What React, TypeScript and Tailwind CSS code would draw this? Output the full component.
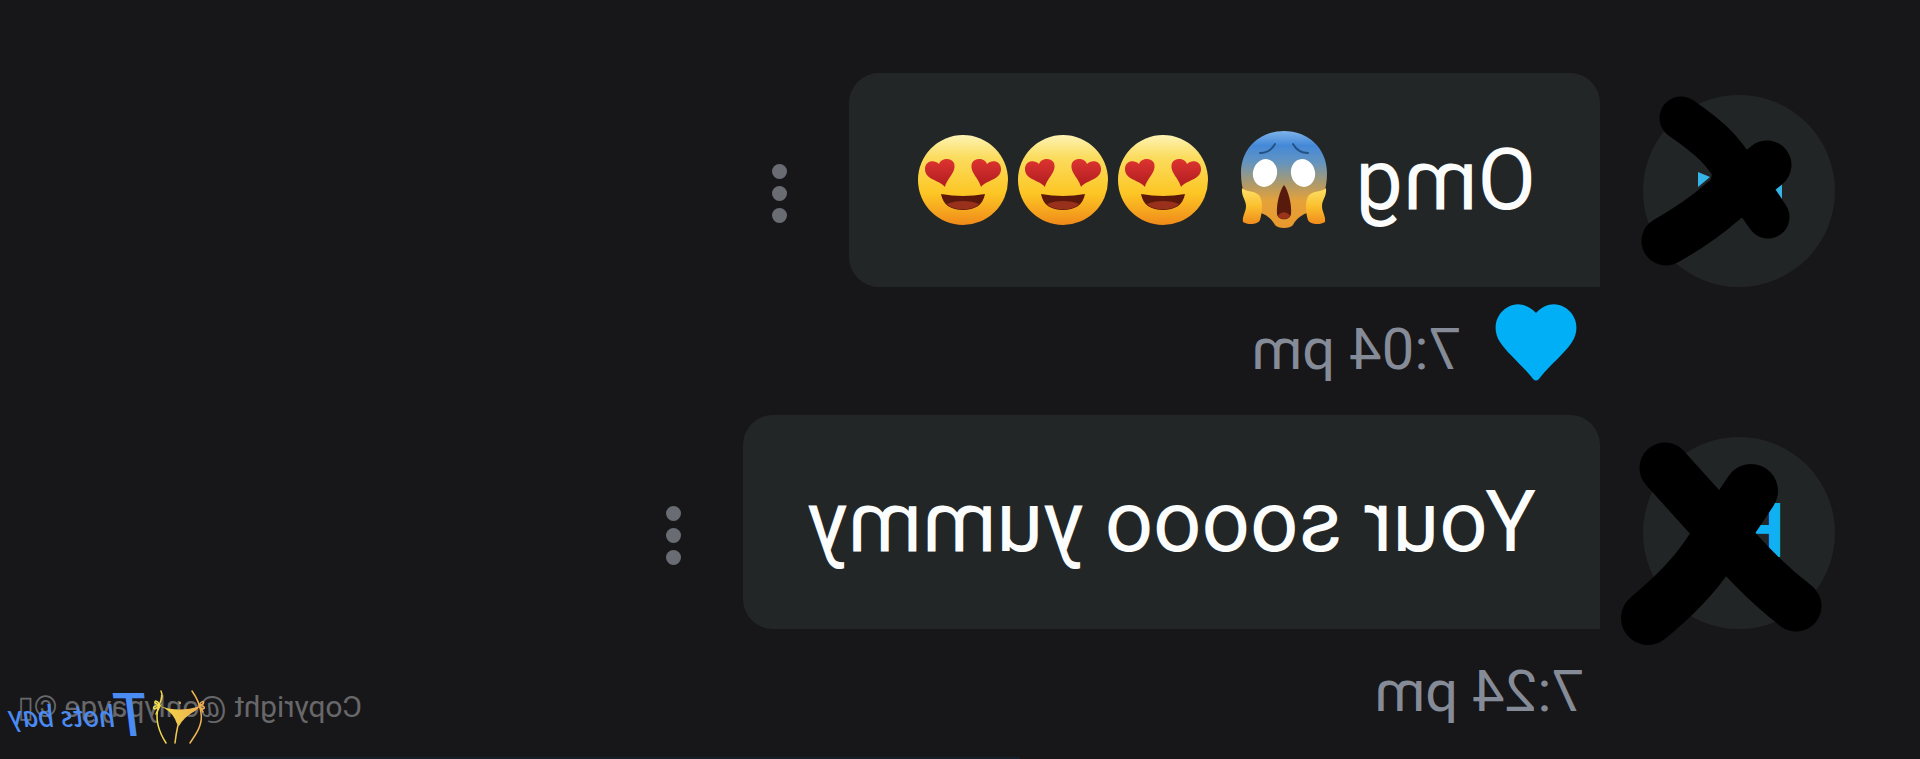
import type { ReactNode } from "react";

function HeartEyes() {
  return (
    <svg viewBox="0 0 100 100" role="img" aria-label="heart eyes" className="size-[100px] shrink-0">
      <defs>
        <linearGradient id="he-face" x1="0" y1="0" x2="0" y2="1">
          <stop offset="0" stopColor="#fdf3b4" />
          <stop offset="0.25" stopColor="#fbdc5e" />
          <stop offset="0.65" stopColor="#fcc624" />
          <stop offset="1" stopColor="#f08a1a" />
        </linearGradient>
        <linearGradient id="he-heart" x1="0" y1="0" x2="0" y2="1">
          <stop offset="0" stopColor="#dd3430" />
          <stop offset="1" stopColor="#b01c20" />
        </linearGradient>
      </defs>
      <circle cx="50" cy="50" r="45" fill="url(#he-face)" />
      <path d="M32 57C27 50 12 50 12 39C12 31 21 29 26 34C28 28 38 27 41 33C44 42 34 48 32 57Z" fill="url(#he-heart)" />
      <path d="M68 57C73 50 88 50 88 39C88 31 79 29 74 34C72 28 62 27 59 33C56 42 66 48 68 57Z" fill="url(#he-heart)" />
      <path d="M28 64Q50 68 72 64C70 75 62 80 50 80C38 80 30 75 28 64Z" fill="#5c190b" />
      <path d="M34 74C42 70 58 70 66 74C60 81 40 81 34 74Z" fill="#98301c" />
    </svg>
  );
}

function Scream() {
  return (
    <svg viewBox="0 0 100 100" role="img" aria-label="screaming in fear" className="size-[100px] shrink-0">
      <defs>
        <linearGradient id="sc-face" x1="0" y1="0" x2="0" y2="1">
          <stop offset="0" stopColor="#7fb2ea" />
          <stop offset="0.15" stopColor="#4489d8" />
          <stop offset="0.32" stopColor="#6394c0" />
          <stop offset="0.55" stopColor="#b09a68" />
          <stop offset="0.72" stopColor="#e5a23a" />
          <stop offset="1" stopColor="#e8982c" />
        </linearGradient>
        <linearGradient id="sc-hand" x1="0" y1="0" x2="0" y2="1">
          <stop offset="0" stopColor="#fde06a" />
          <stop offset="0.5" stopColor="#fbc02e" />
          <stop offset="1" stopColor="#f08c1c" />
        </linearGradient>
      </defs>
      <path
        d="M50 1C74 1 93 18 93 43C93 60 88 73 76 82C68 84 62 89 59 95C56 99 44 99 41 95C38 89 32 84 24 82C12 73 7 60 7 43C7 18 26 1 50 1Z"
        fill="url(#sc-face)"
      />
      <path d="M26 23Q36 23 41 14M74 23Q64 23 59 14" fill="none" stroke="#235286" strokeWidth="2" strokeLinecap="round" />
      <ellipse cx="31" cy="43" rx="12" ry="14" transform="rotate(15 31 43)" fill="#fff" />
      <ellipse cx="69" cy="43" rx="12" ry="14" transform="rotate(-15 69 43)" fill="#fff" />
      <path d="M50 55C54 60 58 74 57 84C56 91 44 91 43 84C42 74 46 60 50 55Z" fill="#571a0c" />
      <path d="M44 86C47 81 53 81 56 86C55 90 45 90 44 86Z" fill="#9a341a" />
      <path d="M8 58C11 62 19 60 25 65C30 72 28 83 26 90C24 95 13 95 9 92C8 86 12 82 12 76C12 70 7 66 8 58Z" fill="url(#sc-hand)" />
      <path d="M92 58C89 62 81 60 75 65C70 72 72 83 74 90C76 95 87 95 91 92C92 86 88 82 88 76C88 70 93 66 92 58Z" fill="url(#sc-hand)" />
    </svg>
  );
}

function Avatar({ children }: { children: ReactNode }) {
  return (
    <div className="mt-[22px] size-48 shrink-0 rounded-full bg-[#222526]">
      <svg viewBox="0 0 192 192" aria-hidden="true" className="size-48 -scale-x-100 overflow-visible">
        {children}
      </svg>
    </div>
  );
}

function Message({ avatar, children, footer }: { avatar: ReactNode; children: ReactNode; footer: ReactNode }) {
  return (
    <article className="flex items-start gap-[43px]">
      {avatar}
      <div>
        <div className="flex items-center gap-14">
          <div className="flex h-[214px] items-center rounded-[30px] rounded-bl-none bg-[#232627] px-16 text-[85px] leading-[100px] whitespace-pre text-[#fbfdfd]">
            {children}
          </div>
          <button type="button" aria-label="Message options" className="mt-[26px] flex w-7 flex-col items-center gap-[7px]">
            <span className="size-[15px] rounded-full bg-[#6a6c74]" />
            <span className="size-[15px] rounded-full bg-[#6a6c74]" />
            <span className="size-[15px] rounded-full bg-[#6a6c74]" />
          </button>
        </div>
        <footer className="flex h-32 items-start gap-[34px] pt-4 text-[58px] leading-[92px] text-[#868b98]">{footer}</footer>
      </div>
    </article>
  );
}

function Watermark() {
  return (
    <div className="absolute right-0 bottom-0 h-[72px] w-[362px]">
      <p className="pt-0.5 text-[30px] leading-9 whitespace-nowrap text-[#68686a]">Copyright @onlypayge ©▯</p>
      <div className="absolute top-0 right-2 flex items-start gap-1">
        <svg viewBox="0 0 54 56" aria-hidden="true" className="mt-0.5 h-14 w-[54px] -scale-x-100">
          <defs>
            <linearGradient id="gold" gradientUnits="userSpaceOnUse" x1="0" y1="0" x2="54" y2="0">
              <stop offset="0" stopColor="#f3e24a" />
              <stop offset="1" stopColor="#efaa50" />
            </linearGradient>
          </defs>
          <g fill="none" stroke="url(#gold)" strokeWidth="1.5" strokeLinecap="round">
            <path d="M9 2C12 8 8 13 6 19C3 31 7 43 14 54" />
            <path d="M40 2C45 9 48 15 49 24C51 36 44 45 38 54" />
            <path d="M26 36Q24 45 23 54" />
            <path d="M8 17C6 11 2 11 3 14L8 17C2 16 0 19 3 20L8 17L4 25M47 17C49 11 53 12 51 15L47 17C53 16 54 20 50 20L47 17L51 23" />
          </g>
          <path d="M8 17Q27 24 48 17Q46 20 43 22Q32 28 27 37Q25 36 23 30Q19 22 8 17Z" fill="url(#gold)" />
          <circle cx="28" cy="14" r="1" fill="#efc04c" />
        </svg>
        <p className="flex items-center font-['Lato'] leading-[48px] font-medium whitespace-pre text-[#4b8bf4] italic">
          <span className="text-[60px]">T</span>
          <span className="pt-1 text-[30px]">hots bay</span>
        </p>
      </div>
    </div>
  );
}

export default function App() {
  return (
    <main className="relative flex min-h-screen -scale-x-100 flex-col overflow-hidden bg-[#171719] font-['Roboto',sans-serif]">
      <section className="flex-1 pt-[73px] pl-[85px]">
        <Message
          avatar={
            <Avatar>
              <path d="M55 77L67 82L55 92ZM131 92L139 87V104Z" fill="#35b5e8" />
              <path d="M38 23C70 45 80 56 95 80L125 122" fill="none" stroke="#000" strokeWidth="43" strokeLinecap="round" />
              <path d="M23 146Q55 128 78 108L124 70" fill="none" stroke="#000" strokeWidth="49" strokeLinecap="round" />
              <path d="M72 66L100 60L118 92L100 118L66 92Z" />
            </Avatar>
          }
          footer={
            <>
              <svg viewBox="0 0 82 78" role="img" aria-label="Liked" className="ml-[23px] h-[78px] w-[82px]">
                <path d="M41 10C33 1 22 -1 13 4C0 11 -3 27 5 39C11 49 30 65 38 76Q41 79 44 76C52 65 71 49 77 39C85 27 82 11 69 4C60 -1 49 1 41 10Z" fill="#00aff5" />
              </svg>
              <time>7:04 pm</time>
            </>
          }
        >
          <span>{"Omg "}</span>
          <Scream />
          <span> </span>
          <HeartEyes />
          <HeartEyes />
          <HeartEyes />
        </Message>
        <Message
          avatar={
            <Avatar>
              <g transform="matrix(-1 0 0 1 192 0)">
                <text x="50" y="120" fontSize="76" fontWeight="700" fill="#10b0f4">
                  H
                </text>
              </g>
              <path d="M22 31L68 82Q108 134 153 169" fill="none" stroke="#000" strokeWidth="51" strokeLinecap="round" />
              <path d="M5 181Q45 148 65 118L108 54" fill="none" stroke="#000" strokeWidth="54" strokeLinecap="round" />
            </Avatar>
          }
          footer={<time className="ml-4">7:24 pm</time>}
        >
          Your soooo yummy
        </Message>
      </section>
      <div className="mr-40 ml-[900px] h-0.5 bg-[#15202a]" />
      <Watermark />
    </main>
  );
}
